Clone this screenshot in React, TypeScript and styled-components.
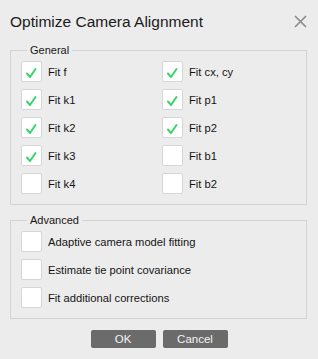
import React from 'react';
import styled, { createGlobalStyle } from 'styled-components';

const Global = createGlobalStyle`
  html, body { margin: 0; padding: 0; background: #ececec; }
  body { font-family: "Liberation Sans", Arial, sans-serif; color: #161616; }
`;

const Dialog = styled.div`
  width: 318px;
  height: 359px;
  box-sizing: border-box;
  background: #ececec;
  display: flex;
  flex-direction: column;
`;

const Header = styled.div`
  height: 43px;
  box-sizing: border-box;
  display: flex;
  align-items: flex-start;
  justify-content: space-between;
  padding: 0 11px 0 10px;
`;

const Title = styled.h1`
  margin: 0;
  padding-top: 12px;
  font-size: 15.5px;
  font-weight: 400;
  line-height: 20px;
  color: #1a1a1a;
`;

const Close = styled.button`
  margin-top: 15px;
  width: 13px;
  height: 13px;
  padding: 0;
  border: none;
  background: none;
  display: flex;
  cursor: pointer;
`;

const Group = styled.fieldset<{ $gap?: number }>`
  margin: ${(p) => p.$gap ?? 0}px 11px 0 10px;
  padding: 4px 10px 10px 10px;
  border: 1px solid #d3d3d3;
  min-width: 0;
`;

const Legend = styled.legend`
  margin-left: 6px;
  padding: 0 3px;
  font-size: 11px;
  line-height: 14px;
  color: #161616;
`;

const Grid = styled.div`
  display: grid;
  grid-template-columns: 141px 1fr;
  row-gap: 7px;
`;

const Stack = styled.div`
  display: flex;
  flex-direction: column;
  gap: 7px;
`;

const Item = styled.label`
  display: flex;
  align-items: center;
  gap: 6px;
  font-size: 11.2px;
  line-height: 14px;
  color: #141414;
`;

const Box = styled.span`
  width: 21px;
  height: 21px;
  box-sizing: border-box;
  border: 1px solid #d6d6d6;
  border-radius: 2px;
  background: #ffffff;
  display: flex;
  flex-shrink: 0;
`;

const Buttons = styled.div`
  margin-top: 11px;
  display: flex;
  justify-content: center;
  gap: 7px;
`;

const Button = styled.button`
  width: 65px;
  height: 18px;
  padding: 0;
  border: none;
  border-radius: 2px;
  background: #6b6b6b;
  color: #f4f4f4;
  font-family: inherit;
  font-size: 11.5px;
  line-height: 18px;
`;

const Check = ({ on, label }: { on: boolean; label: string }) => (
  <Item>
    <Box>
      {on && (
        <svg width="19" height="19" viewBox="1 1 19 19">
          <polyline points="6,12.5 9,16 14.5,8" fill="none" stroke="#3bd46c" strokeWidth="2" strokeLinecap="round" strokeLinejoin="round" />
        </svg>
      )}
    </Box>
    {label}
  </Item>
);

const general: [string, boolean][] = [
  ['Fit f', true], ['Fit cx, cy', true],
  ['Fit k1', true], ['Fit p1', true],
  ['Fit k2', true], ['Fit p2', true],
  ['Fit k3', true], ['Fit b1', false],
  ['Fit k4', false], ['Fit b2', false],
];

const advanced = ['Adaptive camera model fitting', 'Estimate tie point covariance', 'Fit additional corrections'];

export default function App() {
  return (
    <Dialog>
      <Global />
      <Header>
        <Title>Optimize Camera Alignment</Title>
        <Close aria-label="Close">
          <svg width="13" height="13" viewBox="0 0 13 13">
            <path d="M1 1 L12 12 M12 1 L1 12" stroke="#8c8c8c" strokeWidth="1.7" />
          </svg>
        </Close>
      </Header>
      <Group>
        <Legend>General</Legend>
        <Grid>
          {general.map(([l, on]) => (
            <Check key={l} on={on} label={l} />
          ))}
        </Grid>
      </Group>
      <Group $gap={8}>
        <Legend>Advanced</Legend>
        <Stack>
          {advanced.map((l) => (
            <Check key={l} on={false} label={l} />
          ))}
        </Stack>
      </Group>
      <Buttons>
        <Button>OK</Button>
        <Button>Cancel</Button>
      </Buttons>
    </Dialog>
  );
}
